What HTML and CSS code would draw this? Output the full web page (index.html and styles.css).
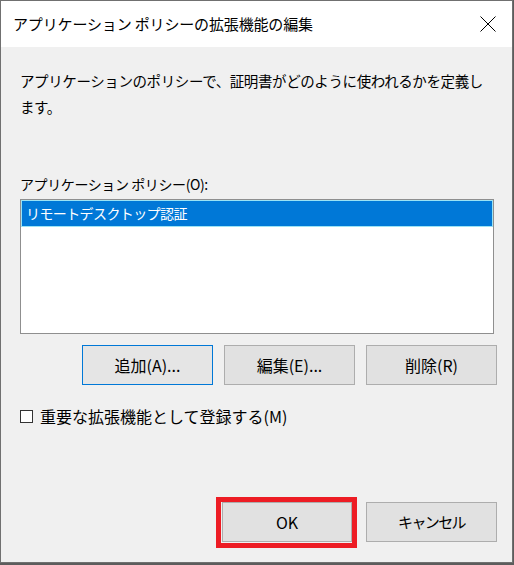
FILE: index.html
```html
<!DOCTYPE html>
<html lang="ja">
<head>
<meta charset="utf-8">
<link rel="stylesheet" href="styles.css">
</head>
<body>
<div class="window">
  <div class="titlebar">
    <span class="title">アプリケーション ポリシーの拡張機能の編集</span>
    <svg class="close" width="16" height="16" viewBox="0 0 16 16"><path d="M0.5 0.5 L15.5 15.5 M15.5 0.5 L0.5 15.5" stroke="#000" stroke-width="1" fill="none"/></svg>
  </div>
  <div class="content">
    <p class="desc">アプリケーションのポリシーで、証明書がどのように使われるかを定義します。</p>
    <div class="label">アプリケーション ポリシー(O):</div>
    <div class="listbox">
      <div class="item selected">リモートデスクトップ認証</div>
    </div>
    <div class="btnrow">
      <button class="btn default">追加(A)...</button>
      <button class="btn">編集(E)...</button>
      <button class="btn">削除(R)</button>
    </div>
    <label class="check"><span class="box"></span><span>重要な拡張機能として登録する(M)</span></label>
    <div class="footer">
      <span class="highlight"><button class="btn">OK</button></span>
      <button class="btn cancel">キャンセル</button>
    </div>
  </div>
</div>
</body>
</html>
```
FILE: styles.css
```css
* { box-sizing: border-box; }
html, body { margin: 0; padding: 0; }
body {
  width: 514px;
  height: 565px;
  background: #5c5c5c;
  font-family: "Noto Sans CJK JP", "Noto Sans", sans-serif;
  color: #000;
  overflow: hidden;
}
.window {
  width: 513px;
  height: 563px;
  border: 1px solid #707070;
  background: #f0f0f0;
  display: flex;
  flex-direction: column;
}
.titlebar {
  height: 46px;
  background: #fff;
  display: flex;
  align-items: center;
  justify-content: space-between;
  padding: 0 16px 0 12px;
  flex: none;
}
.title {
  font-size: 15px;
  color: #000;
  letter-spacing: -0.15px;
  margin-top: -2px;
}
.close { display: block; margin-top: -1px; }
.content {
  flex: 1;
  display: flex;
  flex-direction: column;
  padding: 21px 15px 20px 19px;
  font-size: 14px;
}
.desc {
  margin: 0;
  font-size: 14.5px;
  letter-spacing: -0.4px;
  line-height: 26px;
  width: 470px;
}
.label {
  margin-top: 54px;
  line-height: 20px;
  height: 20px;
  letter-spacing: -0.4px;
}
.listbox {
  margin-top: 5px;
  width: 474px;
  height: 135px;
  border: 1px solid #8f8f8f;
  background: #fff;
  padding: 1px;
}
.item {
  height: 25px;
  line-height: 24px;
  padding-left: 4px;
  letter-spacing: -0.6px;
}
.item.selected {
  background: #0078d7;
  color: #fff;
  box-shadow: 0 0 0 1px #9be3f5;
}
.btnrow {
  margin-top: 11px;
  display: flex;
  justify-content: flex-end;
  gap: 11px;
}
.btn {
  font-family: inherit;
  font-size: 16px;
  width: 131px;
  height: 40px;
  background: #e1e1e1;
  border: 1px solid #adadad;
  color: #000;
  padding: 0 0 1px;
  margin: 0;
  display: block;
}
.btn.default {
  border-color: #0078d7;
  background: #e5e5e5;
}
.btn.cancel {
  font-size: 15px;
  letter-spacing: -1.6px;
}
.check {
  margin-top: 21px;
  display: flex;
  align-items: center;
  gap: 7px;
  height: 20px;
  line-height: 20px;
  font-size: 16px;
}
.box {
  width: 13px;
  height: 13px;
  border: 1px solid #333;
  background: #fff;
  display: block;
}
.footer {
  margin-top: auto;
  display: flex;
  justify-content: flex-end;
  gap: 14px;
}
.highlight {
  position: relative;
  display: block;
}
.highlight .btn { width: 130px; }
.highlight::after {
  content: "";
  position: absolute;
  left: -6px;
  top: -5px;
  right: -5px;
  bottom: -6px;
  border: 5px solid #ed1c24;
  pointer-events: none;
}
```
